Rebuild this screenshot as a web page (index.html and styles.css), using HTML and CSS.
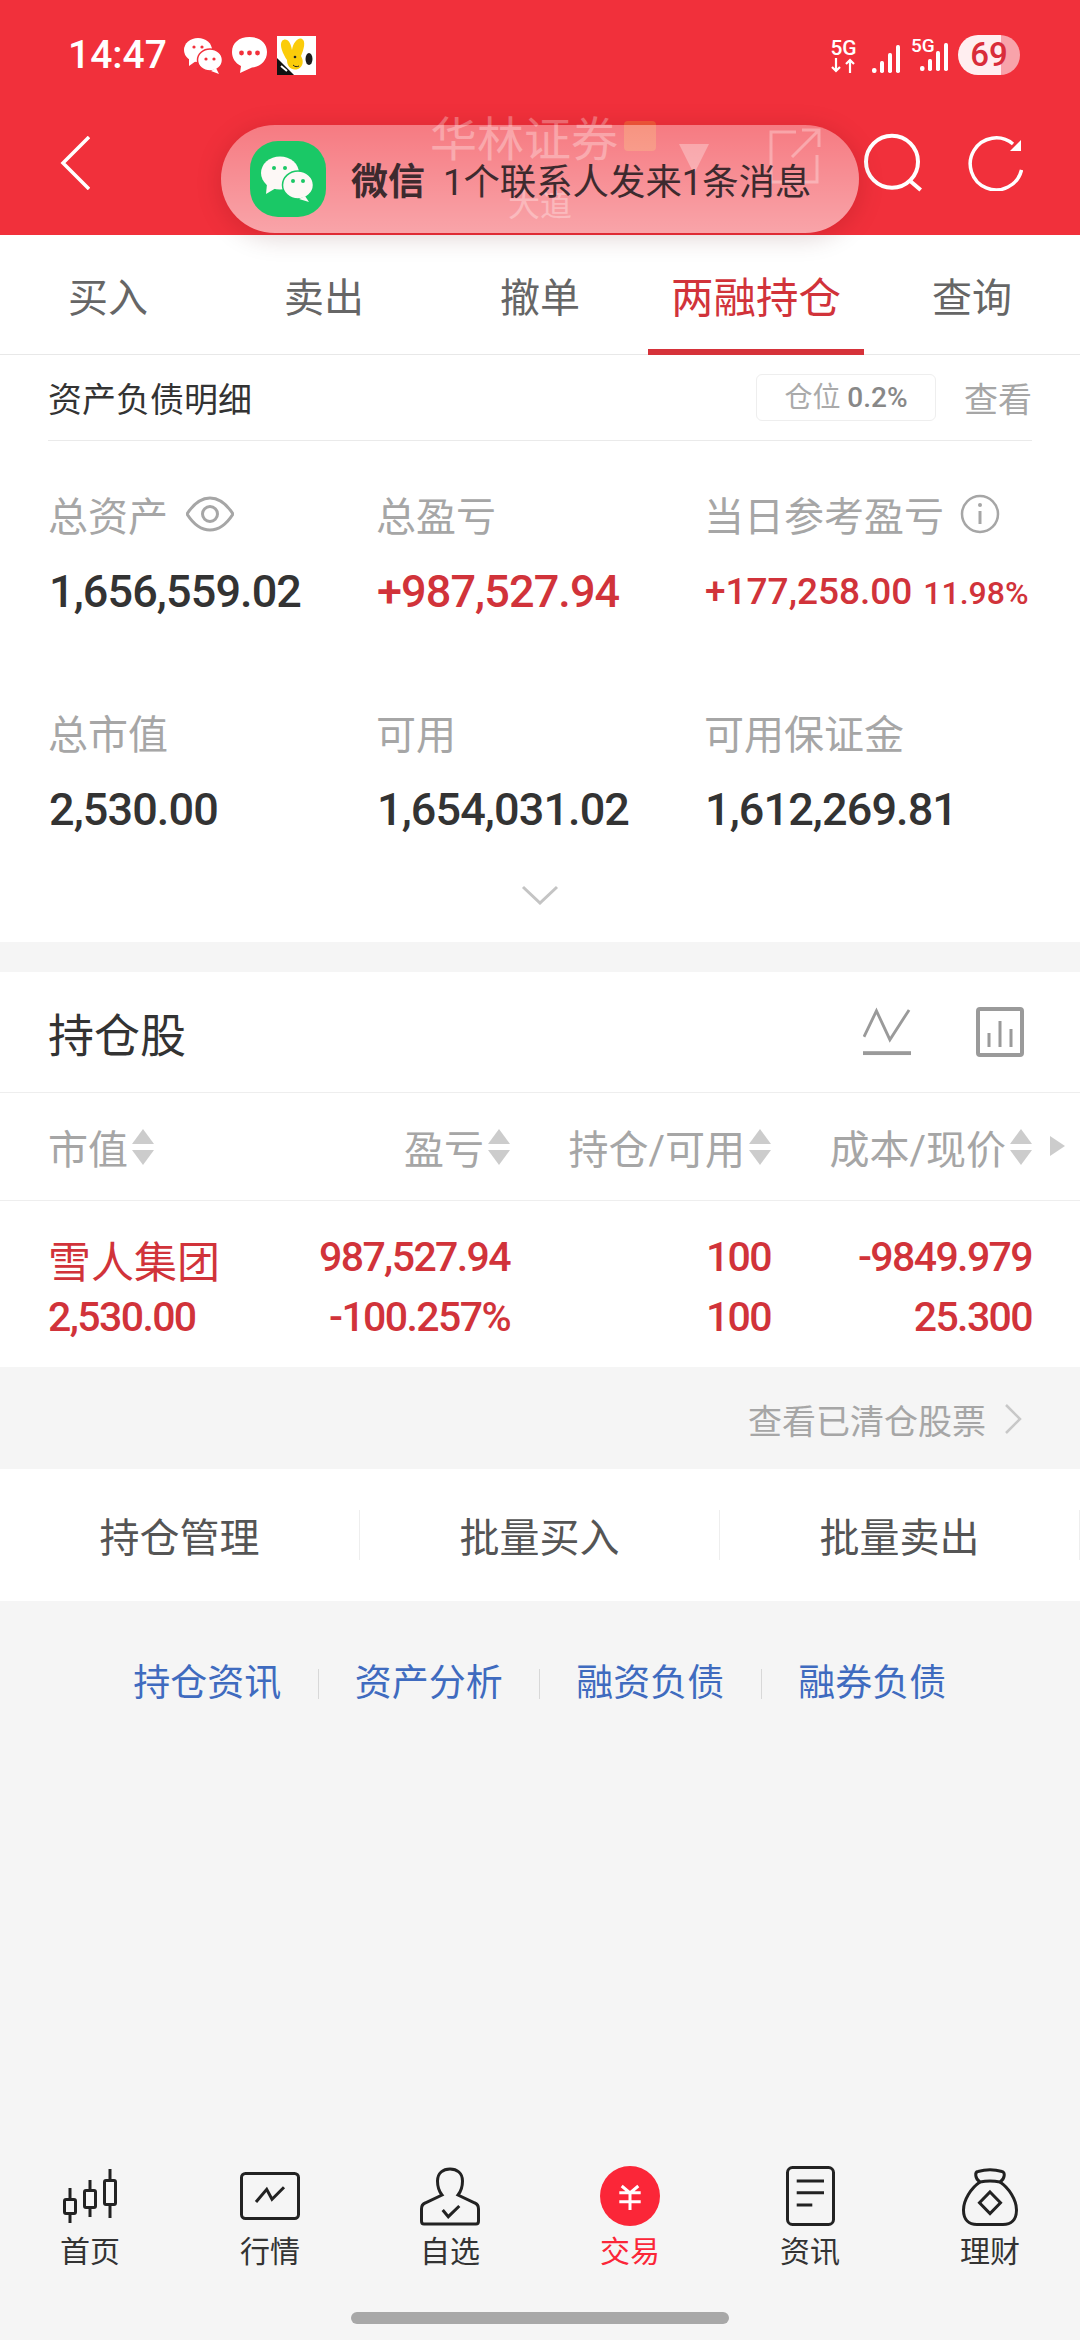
FILE: index.html
```html
<!DOCTYPE html>
<html lang="zh-CN">
  <head>
    <meta charset="UTF-8" />
    <meta name="viewport" content="width=device-width, initial-scale=1.0" />
    <title>两融持仓</title>
    <link rel="stylesheet" href="styles.css">
  </head>
  <body>
    <div class="topbar">
      <div class="status-bar">
        <span class="clock">14:47</span>
        <svg class="st-wechat" viewBox="0 0 38 38"><ellipse cx="14" cy="14" rx="14" ry="12" fill="#fff"/><path d="M5 22l0 8 7-5z" fill="#fff"/><ellipse cx="26" cy="24" rx="12.5" ry="11" fill="#fff" stroke="#f2303b" stroke-width="1.5"/><path d="M32 32l3 6-8-3z" fill="#fff"/><circle cx="10" cy="11" r="1.6" fill="#f2303b"/><circle cx="18" cy="11" r="1.6" fill="#f2303b"/><circle cx="22" cy="23" r="1.6" fill="#f2303b"/><circle cx="30" cy="23" r="1.6" fill="#f2303b"/></svg>
        <svg class="st-bubble" viewBox="0 0 37 38"><path d="M18.5 1C29 1 36 7 36 16s-7 15-15 15.500L9 37l1-7C4 27 1 22 1 16 1 7 8 1 18.500 1z" fill="#fff"/><circle cx="10.500" cy="17" r="2.400" fill="#f2303b"/><circle cx="18.500" cy="17" r="2.400" fill="#f2303b"/><circle cx="26.500" cy="17" r="2.400" fill="#f2303b"/></svg>
        <svg class="st-app" viewBox="0 0 39 39"><rect width="39" height="39" fill="#fff"/><path d="M5 5c3-3 8-2 10 9 1-7 6-13 10-11 4 2 2 10-1 17 3 5 2 11-3 13-6 2-11-2-11-9C6 18 2 9 5 5z" fill="#fbcc0a"/><ellipse cx="32" cy="23" rx="3.500" ry="6" fill="#1c1c1c"/><circle cx="18" cy="21" r="1.300" fill="#222"/><path d="M16 29c2 2 4 2 6 1" fill="none" stroke="#222" stroke-width="1"/><path d="M0 22l17 17H0z" fill="#111"/><path d="M4 30l6 5" stroke="#fff" stroke-width="2"/></svg>
        <span class="status-spacer"></span>
        <div class="net-up">
          <span class="net-label">5G</span>
          <svg viewBox="0 0 27 15"><path d="M6 0v13M2 9l4 4 4-4M20 15V2M16 6l4-4 4 4" fill="none" stroke="#fff" stroke-width="2.200"/></svg>
        </div>
        <svg class="signal" viewBox="0 0 28 30"><g fill="#fff"><rect x="0" y="24" width="4.500" height="5" rx="2"/><rect x="8" y="17" width="4" height="12" rx="1.700"/><rect x="16" y="9" width="4" height="20" rx="1.700"/><rect x="24" y="1" width="4" height="28" rx="1.700"/></g></svg>
        <div class="net-second">
          <span class="net-label small">5G</span>
          <svg class="signal" viewBox="0 0 28 30"><g fill="#fff"><rect x="0" y="24" width="4.500" height="5" rx="2"/><rect x="8" y="17" width="4" height="12" rx="1.700"/><rect x="16" y="9" width="4" height="20" rx="1.700"/><rect x="24" y="1" width="4" height="28" rx="1.700"/></g></svg>
        </div>
        <div class="battery">69</div>
      </div>
      <div class="nav-row">
        <svg class="nav-back" viewBox="0 0 30 54"><path d="M29 1L3 27l26 26" fill="none" stroke="#fff" stroke-width="3.500"/></svg>
        <div class="nav-center">
          <div class="nav-title-row">
            <span class="nav-title">华林证券</span>
            <span class="nav-badge"></span>
            <span class="nav-caret"></span>
            <svg class="nav-link" viewBox="0 0 56 60"><path d="M30 5H5v50h46V28M26 30L53 3M36 3h17v17" fill="none" stroke="#fff" stroke-width="3"/></svg>
          </div>
          <div class="nav-sub">大道</div>
        </div>
        <svg class="nav-search" viewBox="0 0 62 60"><circle cx="30" cy="28.700" r="26" fill="none" stroke="#fff" stroke-width="4"/><path d="M47 47l11.700 10" fill="none" stroke="#fff" stroke-width="4"/></svg>
        <svg class="nav-refresh" viewBox="0 0 56 56"><path d="M46 9A26 26 0 1 0 54.500 35" fill="none" stroke="#fff" stroke-width="3.500"/><path d="M54 5v11H43z" fill="#fff"/></svg>
      </div>
    </div>

    <div class="toast">
      <svg class="toast-icon" viewBox="0 0 76 76"><rect width="76" height="76" rx="28" fill="#1ac866"/><ellipse cx="30" cy="32" rx="19" ry="16.500" fill="#fdf8f6"/><path d="M17 43l-1 10 10-6z" fill="#fdf8f6"/><ellipse cx="48" cy="44" rx="15.500" ry="14" stroke="#1ac866" stroke-width="1.500" fill="#fdf8f6"/><path d="M55 55l4 6-10-3z" fill="#fdf8f6"/><circle cx="24" cy="27" r="2" fill="#1ac866"/><circle cx="35" cy="27" r="2" fill="#1ac866"/><circle cx="43" cy="40" r="2" fill="#1ac866"/><circle cx="53" cy="40" r="2" fill="#1ac866"/></svg>
      <span class="toast-app">微信</span>
      <span class="toast-text">1个联系人发来1条消息</span>
    </div>

    <div class="tabs">
      <div class="tab">买入</div>
      <div class="tab">卖出</div>
      <div class="tab">撤单</div>
      <div class="tab active">两融持仓</div>
      <div class="tab">查询</div>
    </div>

    <div class="assets">
      <div class="assets-head">
        <span class="assets-title">资产负债明细</span>
        <span class="position-pill">仓位 <b>0.2%</b></span>
        <span class="assets-more">查看</span>
      </div>
      <div class="metric-grid">
        <div class="metric">
          <div class="metric-label">总资产
            <svg class="label-icon" viewBox="0 0 48 36"><path d="M1 18C8 7 15 2 24 2s16 5 23 16c-7 11-14 16-23 16S8 29 1 18z" fill="none" stroke="#a6a6a6" stroke-width="3"/><circle cx="24" cy="18" r="7.500" fill="none" stroke="#a6a6a6" stroke-width="3"/></svg>
          </div>
          <div class="metric-value">1,656,559.02</div>
        </div>
        <div class="metric">
          <div class="metric-label">总盈亏</div>
          <div class="metric-value up">+987,527.94</div>
        </div>
        <div class="metric">
          <div class="metric-label">当日参考盈亏
            <svg class="label-icon info" viewBox="0 0 40 40"><circle cx="20" cy="20" r="18" fill="none" stroke="#a6a6a6" stroke-width="2.500"/><path d="M20 17v13" stroke="#a6a6a6" stroke-width="3"/><circle cx="20" cy="11" r="2" fill="#a6a6a6"/></svg>
          </div>
          <div class="metric-value up small">+177,258.00<span class="metric-pct">11.98%</span></div>
        </div>
        <div class="metric">
          <div class="metric-label">总市值</div>
          <div class="metric-value">2,530.00</div>
        </div>
        <div class="metric">
          <div class="metric-label">可用</div>
          <div class="metric-value">1,654,031.02</div>
        </div>
        <div class="metric">
          <div class="metric-label">可用保证金</div>
          <div class="metric-value">1,612,269.81</div>
        </div>
      </div>
      <div class="expand">
        <svg viewBox="0 0 38 20"><path d="M2 2l17 16L36 2" fill="none" stroke="#c4c4c4" stroke-width="3"/></svg>
      </div>
    </div>

    <div class="holdings">
      <div class="holdings-head">
        <span class="holdings-title">持仓股</span>
        <svg class="head-icon" viewBox="0 0 50 50"><path d="M1 30L14 3l14 30L48 2" fill="none" stroke="#9a9a9a" stroke-width="3"/><rect y="45" width="50" height="4" fill="#9a9a9a"/></svg>
        <svg class="head-icon" viewBox="0 0 48 50"><rect x="2" y="2" width="44" height="46" rx="2" fill="none" stroke="#9a9a9a" stroke-width="4"/><path d="M13 40V26M24 40V14M35 40V22" stroke="#9a9a9a" stroke-width="3"/></svg>
      </div>
      <div class="table-head">
        <div class="col-head left">市值<span class="sort"></span></div>
        <div class="col-head">盈亏<span class="sort"></span></div>
        <div class="col-head">持仓/可用<span class="sort"></span></div>
        <div class="col-head">成本/现价<span class="sort"></span></div>
        <span class="more-cols"></span>
      </div>
      <div class="table-row">
        <div class="cell left">
          <div class="stock-name">雪人集团</div>
          <div class="num">2,530.00</div>
        </div>
        <div class="cell">
          <div class="num">987,527.94</div>
          <div class="num">-100.257%</div>
        </div>
        <div class="cell">
          <div class="num">100</div>
          <div class="num">100</div>
        </div>
        <div class="cell">
          <div class="num">-9849.979</div>
          <div class="num">25.300</div>
        </div>
      </div>
    </div>

    <div class="cleared">
      <span>查看已清仓股票</span>
      <svg viewBox="0 0 18 32"><path d="M2 2l14 14L2 30" fill="none" stroke="#c8c8c8" stroke-width="2.500"/></svg>
    </div>

    <div class="actions">
      <div class="action">持仓管理</div>
      <div class="action">批量买入</div>
      <div class="action">批量卖出</div>
    </div>

    <div class="links">
      <div class="link-item">持仓资讯</div>
      <div class="link-item">资产分析</div>
      <div class="link-item">融资负债</div>
      <div class="link-item">融券负债</div>
    </div>

    <div class="bottom-nav">
      <div class="nav-item">
        <svg viewBox="0 0 60 60"><g fill="none" stroke="#222" stroke-width="3"><rect x="4.500" y="33.500" width="11" height="14" rx="1.500"/><rect x="24.500" y="24.500" width="11" height="17" rx="1.500"/><rect x="44.500" y="14.500" width="11" height="24" rx="1.500"/><path d="M10 22v11.500M10 47.500V57M30 14v10.500M30 41.500V51M50 3v11.500M50 38.500V52"/></g></svg>
        <span>首页</span>
      </div>
      <div class="nav-item">
        <svg viewBox="0 0 60 60"><rect x="1.500" y="7.500" width="57" height="45" rx="4" fill="none" stroke="#222" stroke-width="3"/><path d="M16 36l10.700-12.700L32 33.300l12-12" fill="none" stroke="#222" stroke-width="3"/></svg>
        <span>行情</span>
      </div>
      <div class="nav-item">
        <svg viewBox="0 0 60 60"><path d="M22 29C18 24 17.500 20 17.500 15 17.500 7 23 3 30 3s12.500 4 12.500 12c0 5-.5 9-4.500 14l17 8c2.500 1 3.500 3 3.500 6v12c0 2-1 3-2.500 3H4c-1.500 0-2.500-1-2.500-3V43c0-3 1-5 3.500-6z" fill="none" stroke="#222" stroke-width="3"/><path d="M22.700 44l5.600 6.700L39.300 40" fill="none" stroke="#222" stroke-width="3"/></svg>
        <span>自选</span>
      </div>
      <div class="nav-item active">
        <svg viewBox="0 0 60 60"><circle cx="30" cy="30" r="30" fill="#fb2638"/><path d="M21.700 20l8.300 7 8.300-7M19.300 26.700h21.400M19.300 35.700h21.400M30 27v17" fill="none" stroke="#fff" stroke-width="3"/></svg>
        <span>交易</span>
      </div>
      <div class="nav-item">
        <svg viewBox="0 0 60 60"><rect x="7.500" y="1.500" width="46" height="57" rx="5" fill="none" stroke="#222" stroke-width="3"/><path d="M16.700 15H44M16.700 26.700H44M16.700 39h15.600" fill="none" stroke="#222" stroke-width="3"/></svg>
        <span>资讯</span>
      </div>
      <div class="nav-item">
        <svg viewBox="0 0 60 60"><path d="M20 16C11 22 3.500 34 3.500 44c0 10 5.500 14.500 13.500 14.500h26c8 0 13.500-4.500 13.500-14.500 0-10-7.500-22-16.500-28" fill="none" stroke="#222" stroke-width="3"/><path d="M20 16c-5-3-5.500-10-2-10.500 7-2 17-2 24 0 3.500.5 3 7.500-2 10.500-7-1.500-13-1.500-20 0z" fill="none" stroke="#222" stroke-width="3"/><path d="M30 26l10.500 10.700L30 47.500 19.500 36.700z" fill="none" stroke="#222" stroke-width="3"/></svg>
        <span>理财</span>
      </div>
    </div>
    <div class="home-indicator"></div>
  </body>
</html>
```

FILE: styles.css
```css
body {
  margin: 0;
  width: 1080px;
  height: 2340px;
  display: flex;
  flex-direction: column;
  position: relative;
  overflow: hidden;
  background: #f5f5f5;
  font-family: Roboto, "Noto Sans CJK SC", sans-serif;
  color: #333;
}

.topbar {
  height: 235px;
  background: #f1303b;
  color: #fff;
}

.status-bar {
  height: 110px;
  display: flex;
  align-items: center;
  padding: 0 60px 0 68px;
  box-sizing: border-box;
}

.clock {
  font-size: 39px;
  font-weight: 500;
  width: 116px;
}

.st-wechat {
  width: 38px;
  height: 38px;
  margin-right: 9px;
}

.st-bubble {
  width: 37px;
  height: 38px;
  margin-right: 9px;
}

.st-app {
  width: 39px;
  height: 39px;
}

.status-spacer {
  flex: 1;
}

.net-up {
  width: 27px;
  display: flex;
  flex-direction: column;
  align-items: center;
  margin-right: 15px;
}

.net-up svg {
  width: 27px;
  height: 15px;
}

.net-label {
  font-size: 21px;
  font-weight: 500;
  line-height: 20px;
}

.net-label.small {
  position: absolute;
  left: 911px;
  top: 36px;
  font-size: 19px;
}

.signal {
  width: 28px;
  height: 30px;
}

.net-up + .signal {
  margin-top: 8px;
}

.net-second {
  margin-left: 20px;
  margin-right: 10px;
  margin-top: 8px;
}

.battery {
  width: 62px;
  height: 40px;
  border-radius: 20px;
  background: linear-gradient(90deg, #ffeef0 69%, #f8a3aa 69%);
  color: #d92d3a;
  font-size: 33px;
  font-weight: 500;
  line-height: 40px;
  text-align: center;
}

.nav-row {
  height: 106px;
  display: flex;
  align-items: center;
  padding: 0 57px 0 60px;
}

.nav-back {
  width: 30px;
  height: 54px;
}

.nav-center {
  flex: 1;
  position: relative;
  display: flex;
  flex-direction: column;
  height: 106px;
  opacity: 0.3;
}

.nav-title-row {
  display: flex;
  align-items: center;
  padding-left: 340px;
  height: 72px;
}

.nav-title {
  font-size: 47px;
  line-height: 56px;
  margin-top: -13px;
}

.nav-badge {
  width: 32px;
  height: 30px;
  margin: -20px 0 0 6px;
  border-radius: 4px;
  background: #f9b23a;
}

.nav-caret {
  width: 0;
  height: 0;
  margin: 26px 0 0 23px;
  border-left: 15px solid transparent;
  border-right: 15px solid transparent;
  border-top: 30px solid #fff;
}

.nav-link {
  width: 56px;
  height: 60px;
  margin: 22px 0 0 57px;
}

.nav-sub {
  font-size: 32px;
  line-height: 34px;
  text-align: center;
  margin: 6px 0 0 128px;
}

.nav-search {
  width: 62px;
  height: 60px;
  margin-right: 43px;
}

.nav-refresh {
  width: 56px;
  height: 56px;
}

.toast {
  position: absolute;
  left: 221px;
  top: 125px;
  width: 638px;
  height: 108px;
  border-radius: 54px;
  display: flex;
  align-items: center;
  background: linear-gradient(180deg, rgba(255, 255, 255, 0.36), rgba(255, 255, 255, 0.56));
  box-shadow: 0 4px 26px rgba(80, 0, 0, 0.18);
}

.toast-icon {
  width: 76px;
  height: 76px;
  margin-left: 29px;
}

.toast-app {
  margin-left: 25px;
  font-size: 37px;
  font-weight: 700;
  color: #3d2a2e;
}

.toast-text {
  margin-left: 18px;
  font-size: 36.4px;
  color: #3d2a2e;
}

.tabs {
  height: 120px;
  display: flex;
  background: #fff;
  border-bottom: 1px solid #e8e8e8;
  box-sizing: border-box;
}

.tab {
  width: 216px;
  box-sizing: border-box;
  text-align: center;
  font-size: 40px;
  line-height: 128px;
  color: #666;
}

.tab.active {
  font-size: 42.5px;
  color: #d1333a;
  border-bottom: 6px solid #d6323a;
  height: 120px;
}

.assets {
  height: 587px;
  background: #fff;
  box-sizing: border-box;
  padding: 0 48px;
}

.assets-head {
  height: 86px;
  display: flex;
  align-items: center;
  border-bottom: 1px solid #eaeaea;
  box-sizing: border-box;
}

.assets-title {
  flex: 1;
  font-size: 34px;
  color: #333;
}

.position-pill {
  width: 180px;
  height: 47px;
  box-sizing: border-box;
  border: 1px solid #eeeeee;
  border-radius: 6px;
  text-align: center;
  font-size: 28px;
  line-height: 45px;
  color: #aaa;
}

.position-pill b {
  font-weight: 500;
  color: #888;
}

.assets-more {
  margin-left: 28px;
  font-size: 34px;
  color: #a6a6a6;
}

.metric-grid {
  display: grid;
  grid-template-columns: 328px 328px 328px;
  row-gap: 88px;
  padding-top: 48px;
}

.metric {
  height: 130px;
}

.metric-label {
  height: 50px;
  display: flex;
  align-items: center;
  font-size: 40px;
  color: #a6a6a6;
}

.label-icon {
  width: 48px;
  height: 36px;
  margin-left: 18px;
}

.label-icon.info {
  width: 40px;
  height: 40px;
  margin-left: 16px;
}

.metric-value {
  margin-top: 23px;
  padding-left: 1px;
  height: 60px;
  font-size: 45px;
  line-height: 60px;
  font-weight: 500;
  letter-spacing: -0.9px;
  color: #333;
  white-space: nowrap;
}

.metric-value.up {
  color: #d1333a;
}

.metric-value.small {
  font-size: 37px;
  letter-spacing: 0;
}

.metric-pct {
  margin-left: 11px;
  font-size: 32px;
}

.expand {
  margin-top: 48px;
}

.expand svg {
  display: block;
  width: 38px;
  height: 20px;
  margin: 0 auto;
}

.holdings {
  margin-top: 30px;
  background: #fff;
}

.holdings-head {
  height: 120px;
  display: flex;
  align-items: center;
  gap: 65px;
  padding: 0 56px 0 48px;
  border-bottom: 1px solid #eeeeee;
}

.holdings-title {
  flex: 1;
  font-size: 46px;
  color: #333;
}

.head-icon {
  width: 48px;
  height: 50px;
}

.table-head {
  position: relative;
  height: 107px;
  display: grid;
  grid-template-columns: 220px 242px 261px 261px;
  padding: 0 48px;
  align-items: center;
  border-bottom: 1px solid #eeeeee;
}

.col-head {
  display: flex;
  justify-content: flex-end;
  align-items: center;
  font-size: 40px;
  color: #a6a6a6;
}

.col-head.left {
  justify-content: flex-start;
}

.sort {
  position: relative;
  width: 22px;
  height: 36px;
  margin-left: 4px;
}

.sort::before,
.sort::after {
  content: "";
  position: absolute;
  left: 0;
  border-left: 11px solid transparent;
  border-right: 11px solid transparent;
}

.sort::before {
  top: 0;
  border-bottom: 15px solid #cccccc;
}

.sort::after {
  bottom: 0;
  border-top: 15px solid #cccccc;
}

.more-cols {
  position: absolute;
  left: 1050px;
  top: 43px;
  border-top: 10px solid transparent;
  border-bottom: 10px solid transparent;
  border-left: 15px solid #cccccc;
}

.table-row {
  height: 166px;
  display: grid;
  grid-template-columns: 220px 242px 261px 261px;
  padding: 0 48px;
  box-sizing: border-box;
  color: #d1333a;
}

.cell {
  display: flex;
  flex-direction: column;
  align-items: flex-end;
  padding-top: 26px;
}

.cell.left {
  align-items: flex-start;
}

.num {
  height: 60px;
  font-size: 41px;
  font-weight: 500;
  line-height: 60px;
  letter-spacing: -1.6px;
  white-space: nowrap;
}

.stock-name {
  height: 60px;
  margin-top: 6px;
  margin-bottom: -6px;
  font-size: 43px;
  line-height: 60px;
}

.cleared {
  height: 102px;
  display: flex;
  justify-content: flex-end;
  align-items: center;
  gap: 18px;
  padding: 2px 58px 0 0;
  box-sizing: border-box;
  font-size: 34px;
  color: #a6a6a6;
}

.cleared svg {
  width: 18px;
  height: 32px;
}

.actions {
  height: 132px;
  display: flex;
  align-items: center;
  background: #fff;
}

.action {
  width: 360px;
  height: 50px;
  box-sizing: border-box;
  border-right: 1px solid #eeeeee;
  text-align: center;
  font-size: 40px;
  line-height: 58px;
  color: #555;
}

.links {
  display: flex;
  padding: 68px 0 0 97px;
}

.link-item {
  width: 221.5px;
  height: 30px;
  box-sizing: border-box;
  border-right: 1px solid #d8d8d8;
  text-align: center;
  font-size: 37px;
  line-height: 30px;
  color: #3f6bbf;
}

.link-item:last-child {
  border-right: none;
}

.bottom-nav {
  margin-top: auto;
  margin-bottom: 68px;
  display: flex;
}

.nav-item {
  width: 180px;
  display: flex;
  flex-direction: column;
  align-items: center;
  font-size: 30px;
  color: #333;
}

.nav-item svg {
  width: 60px;
  height: 60px;
}

.nav-item span {
  margin-top: 6px;
  line-height: 40px;
}

.nav-item.active {
  color: #fb2638;
}

.home-indicator {
  position: absolute;
  left: 351px;
  top: 2312px;
  width: 378px;
  height: 12px;
  border-radius: 6px;
  background: #a8a8a8;
}
```
